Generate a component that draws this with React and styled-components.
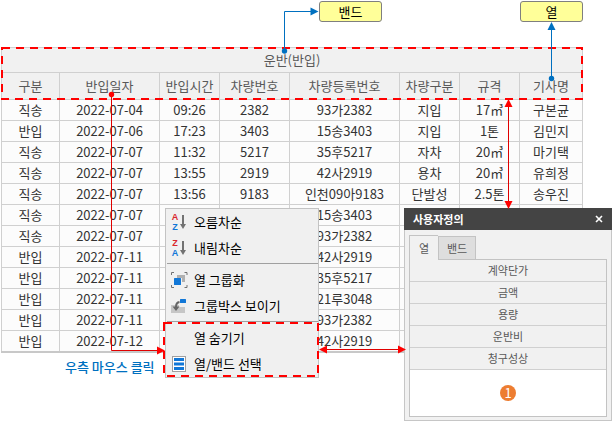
import React from "react";
import styled, { createGlobalStyle } from "styled-components";

const GlobalStyle = createGlobalStyle`
  *, *::before, *::after { box-sizing: border-box; }
  body {
    margin: 0;
    background: #ffffff;
    color: #333333;
    font-family: "Noto Sans CJK KR", "Noto Sans", sans-serif;
    font-size: 13px;
  }
  button { font: inherit; color: inherit; }
`;

const Stage = styled.main`
  position: relative;
  min-height: 100vh;
  padding: 1px 30px 0 1px;
`;

const Callouts = styled.div`
  display: flex;
  justify-content: flex-end;
  gap: 138px;
`;

const Callout = styled.div`
  width: 63px;
  height: 21px;
  border: 1px solid #7f7f7f;
  border-radius: 3px;
  background: #ffff99;
  color: #000000;
  line-height: 19px;
  text-align: center;
`;

const Grid = styled.table`
  width: 100%;
  margin-top: 25px;
  border-collapse: collapse;
  table-layout: fixed;
  text-align: center;
  background: #fcfcfc;
  th, td {
    padding: 0;
    border: 1px solid #d0d0d0;
    white-space: nowrap;
  }
  tbody tr:last-child td { border-bottom: 2px solid #c8c8c8; }
`;

const HeadCell = styled.th`
  height: ${(p) => (p.$band ? 25 : 27)}px;
  background: #f1f1f1;
  color: #595959;
  font-weight: 400;
  line-height: 20px;
`;

const Cell = styled.td`
  height: 21px;
  line-height: 20px;
`;

const Caption = styled.p`
  margin: 4px 0 0 64px;
  color: #0070c0;
  font-weight: 500;
  line-height: 20px;
`;

const Menu = styled.div`
  position: absolute;
  left: 165px;
  top: 208px;
  width: 154px;
  border: 1px solid #c3c3c3;
  background: #f0f0f0;
  color: #000000;
`;

const MenuItem = styled.button`
  display: flex;
  align-items: center;
  gap: 6px;
  width: 100%;
  height: 26px;
  padding: 0 0 0 5px;
  border: 0;
  background: transparent;
  line-height: 20px;
  white-space: nowrap;
  svg { flex: none; }
`;

const MenuRule = styled.hr`
  height: 1px;
  margin: 2px 0 3px 1px;
  border: 0;
  background: #a0a0a0;
`;

const Dialog = styled.section`
  position: absolute;
  left: 404px;
  top: 208px;
  width: 208px;
  border: 1px solid #c6c6c6;
  border-top: 0;
  background: #f1f1f1;
  font-size: 11px;
`;

const TitleBar = styled.header`
  display: flex;
  align-items: center;
  justify-content: space-between;
  height: 22px;
  margin: 0 -1px;
  padding: 0 9px;
  background: #444444;
  color: #ffffff;
`;

const Title = styled.h2`
  margin: 0;
  font-size: 11px;
  font-weight: 700;
  line-height: 20px;
`;

const CloseButton = styled.button`
  display: flex;
  padding: 0;
  border: 0;
  background: transparent;
`;

const Tabs = styled.div`
  display: flex;
  align-items: flex-end;
  padding: 5px 4px 0;
`;

const Tab = styled.button`
  position: relative;
  z-index: ${(p) => (p.$active ? 1 : 0)};
  width: ${(p) => (p.$active ? 29 : 38)}px;
  height: ${(p) => (p.$active ? 25 : 23)}px;
  margin-bottom: ${(p) => (p.$active ? -1 : 0)}px;
  padding: 0;
  border: 1px solid #c3c3c3;
  border-width: ${(p) => (p.$active ? "1px 0 0 1px" : "1px 1px 0 1px")};
  background: ${(p) => (p.$active ? "#f1f1f1" : "#dedede")};
  color: #595959;
  line-height: 20px;
`;

const FieldBox = styled.div`
  margin: 0 4px 3px;
  height: 158px;
  border: 1px solid #c3c3c3;
  background: #ffffff;
`;

const FieldList = styled.ul`
  margin: 0;
  padding: 0;
  list-style: none;
`;

const Field = styled.li`
  height: 22px;
  border-bottom: 1px solid #d0d0d0;
  background: #f1f1f1;
  color: #595959;
  line-height: 21px;
  text-align: center;
`;

const Badge = styled.div`
  width: 16px;
  height: 16px;
  margin: 15px auto 0;
  border-radius: 50%;
  background: #ed7d31;
  color: #ffffff;
  font-size: 13px;
  line-height: 16px;
  text-align: center;
`;

const Connectors = styled.svg`
  position: absolute;
  left: 0;
  top: 0;
  pointer-events: none;
`;

const SortLetter = styled.text`
  font-family: "Liberation Sans", sans-serif;
  font-size: 9px;
  font-weight: 700;
  text-anchor: middle;
`;

const columns = [
  ["구분", 58],
  ["반입일자", 100],
  ["반입시간", 60],
  ["차량번호", 70],
  ["차량등록번호", 110],
  ["차량구분", 60],
  ["규격", 60],
  ["기사명", 63],
];

const rows = [
  ["직송", "2022-07-04", "09:26", "2382", "93가2382", "지입", "17㎥", "구본균"],
  ["반입", "2022-07-06", "17:23", "3403", "15송3403", "지입", "1톤", "김민지"],
  ["직송", "2022-07-07", "11:32", "5217", "35후5217", "자차", "20㎥", "마기택"],
  ["직송", "2022-07-07", "13:55", "2919", "42사2919", "용차", "20㎥", "유희정"],
  ["직송", "2022-07-07", "13:56", "9183", "인천09아9183", "단발성", "2.5톤", "송우진"],
  ["직송", "2022-07-07", "", "", "15송3403", "", "", ""],
  ["직송", "2022-07-07", "", "", "93가2382", "", "", ""],
  ["반입", "2022-07-11", "", "", "42사2919", "", "", ""],
  ["반입", "2022-07-11", "", "", "35후5217", "", "", ""],
  ["반입", "2022-07-11", "", "", "21루3048", "", "", ""],
  ["반입", "2022-07-11", "", "", "93가2382", "", "", ""],
  ["반입", "2022-07-12", "", "", "42사2919", "", "", ""],
];

const fields = ["계약단가", "금액", "용량", "운반비", "청구성상"];

const SortIcon = ({ descending }) => (
  <svg width="17" height="18" viewBox="0 0 17 18" aria-hidden="true">
    <SortLetter x="4" y="7" fill="#d9262c">{descending ? "Z" : "A"}</SortLetter>
    <SortLetter x="4" y="17" fill="#1177d7">{descending ? "A" : "Z"}</SortLetter>
    <path d="M11 2h2v9h2L12 16 9 11h2z" fill="#727272" />
  </svg>
);

const GroupIcon = () => (
  <svg width="17" height="16" viewBox="0 0 17 16" aria-hidden="true">
    <path d="M3 .5H.5V3M13.500 .5h2.500V3M.5 13v2.500H3M16 13v2.500h-2.500" stroke="#727272" fill="none" />
    <path d="M6 3h8v7h-3V6H6z" fill="#b0b0b0" />
    <rect x="3" y="6" width="7" height="7" rx=".5" fill="#1177d7" />
  </svg>
);

const GroupBoxIcon = () => (
  <svg width="17" height="16" viewBox="0 0 17 16" aria-hidden="true">
    <path d="M0 7h8v2h6v6H0z" fill="#c6c6c6" />
    <rect x="9" y="1" width="6" height="4" rx=".5" fill="#1177d7" />
    <path d="M8.500 4Q5 4.500 5 9" stroke="#666666" strokeWidth="2" fill="none" />
    <path d="M1.500 8.500h7L5 13z" fill="#666666" />
  </svg>
);

const ChooserIcon = () => (
  <svg width="17" height="16" viewBox="0 0 17 16" aria-hidden="true">
    <rect x="1.500" y=".5" width="13" height="15" fill="#ffffff" stroke="#a0a0a0" />
    <path d="M3 2h10v3H3zM3 6.500h10v3H3zM3 11h10v3H3z" fill="#1177d7" />
  </svg>
);

const EmptyIcon = () => <svg width="17" height="16" aria-hidden="true" />;

export default function App() {
  return (
    <>
      <GlobalStyle />
      <Stage>
        <Callouts>
          <Callout>밴드</Callout>
          <Callout>열</Callout>
        </Callouts>

        <Grid>
          <colgroup>
            {columns.map(([name, width]) => (
              <col key={name} width={width} />
            ))}
          </colgroup>
          <thead>
            <tr>
              <HeadCell $band colSpan={8}>운반(반입)</HeadCell>
            </tr>
            <tr>
              {columns.map(([name]) => (
                <HeadCell key={name} scope="col">{name}</HeadCell>
              ))}
            </tr>
          </thead>
          <tbody>
            {rows.map((row, r) => (
              <tr key={r}>
                {row.map((value, c) => (
                  <Cell key={c}>{value}</Cell>
                ))}
              </tr>
            ))}
          </tbody>
        </Grid>
        <Caption>우측 마우스 클릭</Caption>

        <Menu role="menu">
          <MenuItem role="menuitem"><SortIcon />오름차순</MenuItem>
          <MenuItem role="menuitem"><SortIcon descending />내림차순</MenuItem>
          <MenuRule />
          <MenuItem role="menuitem"><GroupIcon />열 그룹화</MenuItem>
          <MenuItem role="menuitem"><GroupBoxIcon />그룹박스 보이기</MenuItem>
          <MenuRule />
          <MenuItem role="menuitem"><EmptyIcon />열 숨기기</MenuItem>
          <MenuItem role="menuitem"><ChooserIcon />열/밴드 선택</MenuItem>
        </Menu>

        <Dialog aria-label="사용자정의">
          <TitleBar>
            <Title>사용자정의</Title>
            <CloseButton aria-label="닫기">
              <svg width="8" height="8" viewBox="0 0 8 8" aria-hidden="true">
                <path d="M1 1l6 6M7 1L1 7" stroke="#ffffff" strokeWidth="1.600" />
              </svg>
            </CloseButton>
          </TitleBar>
          <Tabs role="tablist">
            <Tab role="tab" aria-selected="true" $active>열</Tab>
            <Tab role="tab" aria-selected="false">밴드</Tab>
          </Tabs>
          <FieldBox role="tabpanel">
            <FieldList>
              {fields.map((name) => (
                <Field key={name}>{name}</Field>
              ))}
            </FieldList>
            <Badge>1</Badge>
          </FieldBox>
        </Dialog>

        <Connectors width="613" height="421" viewBox="0 0 613 421" aria-hidden="true">
          <g fill="none" stroke="#ff0000" strokeWidth="2" strokeDasharray="8 6">
            <rect x="2" y="48" width="580" height="51" />
            <rect x="164" y="323" width="154" height="53" />
          </g>
          <g fill="none" stroke="#0070c0">
            <path d="M284.500 51V11.500H312" />
            <path d="M551.500 78V28" />
          </g>
          <g fill="#0070c0">
            <circle cx="284.500" cy="51" r="2.700" />
            <path d="M310.500 7.500L318.500 11.500L310.500 15.500z" />
            <circle cx="551.500" cy="78.500" r="2.700" />
            <path d="M547.500 30L551.500 22L555.500 30z" />
          </g>
          <g fill="none" stroke="#e00000">
            <path d="M111.500 95V350.500H158" />
            <path d="M508.500 105V203" />
            <path d="M325 349.500H399" />
          </g>
          <g fill="#ff0000">
            <circle cx="111.500" cy="94.500" r="2.700" />
            <path d="M157 346.500L165 350.500L157 354.500z" />
            <path d="M504.500 107L508.500 99L512.500 107z" />
            <path d="M504.500 201L508.500 209L512.500 201z" />
            <path d="M327 345.500L319 349.500L327 353.500z" />
            <path d="M398 345.500L406 349.500L398 353.500z" />
          </g>
        </Connectors>
      </Stage>
    </>
  );
}
